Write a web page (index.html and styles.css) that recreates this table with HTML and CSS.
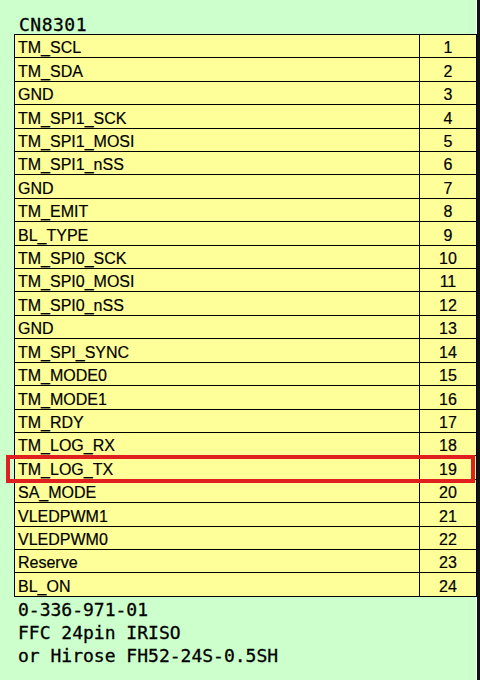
FILE: index.html
```html
<!DOCTYPE html>
<html>
<head>
<meta charset="utf-8">
<link rel="stylesheet" href="styles.css">
</head>
<body>
<div class="page">
  <div class="title">CN8301</div>
  <div class="table-wrap">
    <table class="pins">
      <tr><td class="name">TM_SCL</td><td class="num">1</td></tr>
      <tr><td class="name">TM_SDA</td><td class="num">2</td></tr>
      <tr><td class="name">GND</td><td class="num">3</td></tr>
      <tr><td class="name">TM_SPI1_SCK</td><td class="num">4</td></tr>
      <tr><td class="name">TM_SPI1_MOSI</td><td class="num">5</td></tr>
      <tr><td class="name">TM_SPI1_nSS</td><td class="num">6</td></tr>
      <tr><td class="name">GND</td><td class="num">7</td></tr>
      <tr><td class="name">TM_EMIT</td><td class="num">8</td></tr>
      <tr><td class="name">BL_TYPE</td><td class="num">9</td></tr>
      <tr><td class="name">TM_SPI0_SCK</td><td class="num">10</td></tr>
      <tr><td class="name">TM_SPI0_MOSI</td><td class="num">11</td></tr>
      <tr><td class="name">TM_SPI0_nSS</td><td class="num">12</td></tr>
      <tr><td class="name">GND</td><td class="num">13</td></tr>
      <tr><td class="name">TM_SPI_SYNC</td><td class="num">14</td></tr>
      <tr><td class="name">TM_MODE0</td><td class="num">15</td></tr>
      <tr><td class="name">TM_MODE1</td><td class="num">16</td></tr>
      <tr><td class="name">TM_RDY</td><td class="num">17</td></tr>
      <tr><td class="name">TM_LOG_RX</td><td class="num">18</td></tr>
      <tr><td class="name">TM_LOG_TX</td><td class="num">19</td></tr>
      <tr><td class="name">SA_MODE</td><td class="num">20</td></tr>
      <tr><td class="name">VLEDPWM1</td><td class="num">21</td></tr>
      <tr><td class="name">VLEDPWM0</td><td class="num">22</td></tr>
      <tr><td class="name">Reserve</td><td class="num">23</td></tr>
      <tr><td class="name">BL_ON</td><td class="num">24</td></tr>
    </table>
    <div class="highlight"></div>
  </div>
  <div class="notes">
    <div>0-336-971-01</div>
    <div>FFC 24pin IRISO</div>
    <div>or Hirose FH52-24S-0.5SH</div>
  </div>
</div>
</body>
</html>
```

FILE: styles.css
```css
html {
  background: #111;
}
body {
  margin: 0;
  width: 480px;
  height: 680px;
  overflow: hidden;
}
.page {
  width: 477px;
  height: 680px;
  background: #ccffcc;
  border-right: 1px solid #ffffff;
  box-sizing: border-box;
  padding: 16px 0 0 14px;
  color: #000;
}
.title {
  font-family: "DejaVu Sans Mono", monospace;
  font-size: 18px;
  line-height: 18px;
  padding-left: 5px;
  letter-spacing: 0.5px;
  -webkit-text-stroke: 0.3px #000;
}
.table-wrap {
  position: relative;
  width: 463px;
}
.pins {
  border-collapse: collapse;
  width: 463px;
  height: 563px;
  background: #ffff99;
  font-family: "Liberation Sans", Arial, sans-serif;
  font-size: 16px;
  -webkit-text-stroke: 0.2px #000;
}
.pins td {
  border: 1px solid #000;
  padding: 0;
  line-height: 18px;
  vertical-align: bottom;
}
.pins .name {
  padding-left: 3px;
  width: 400px;
}
.pins .num {
  text-align: center;
  width: 56px;
}
.highlight {
  position: absolute;
  top: 421px;
  left: -8px;
  width: 469px;
  height: 28px;
  box-sizing: border-box;
  border: 4px solid #e0201e;
}
.notes {
  font-family: "DejaVu Sans Mono", monospace;
  font-size: 18px;
  line-height: 23px;
  padding: 1px 0 0 4px;
  -webkit-text-stroke: 0.3px #000;
}
```
